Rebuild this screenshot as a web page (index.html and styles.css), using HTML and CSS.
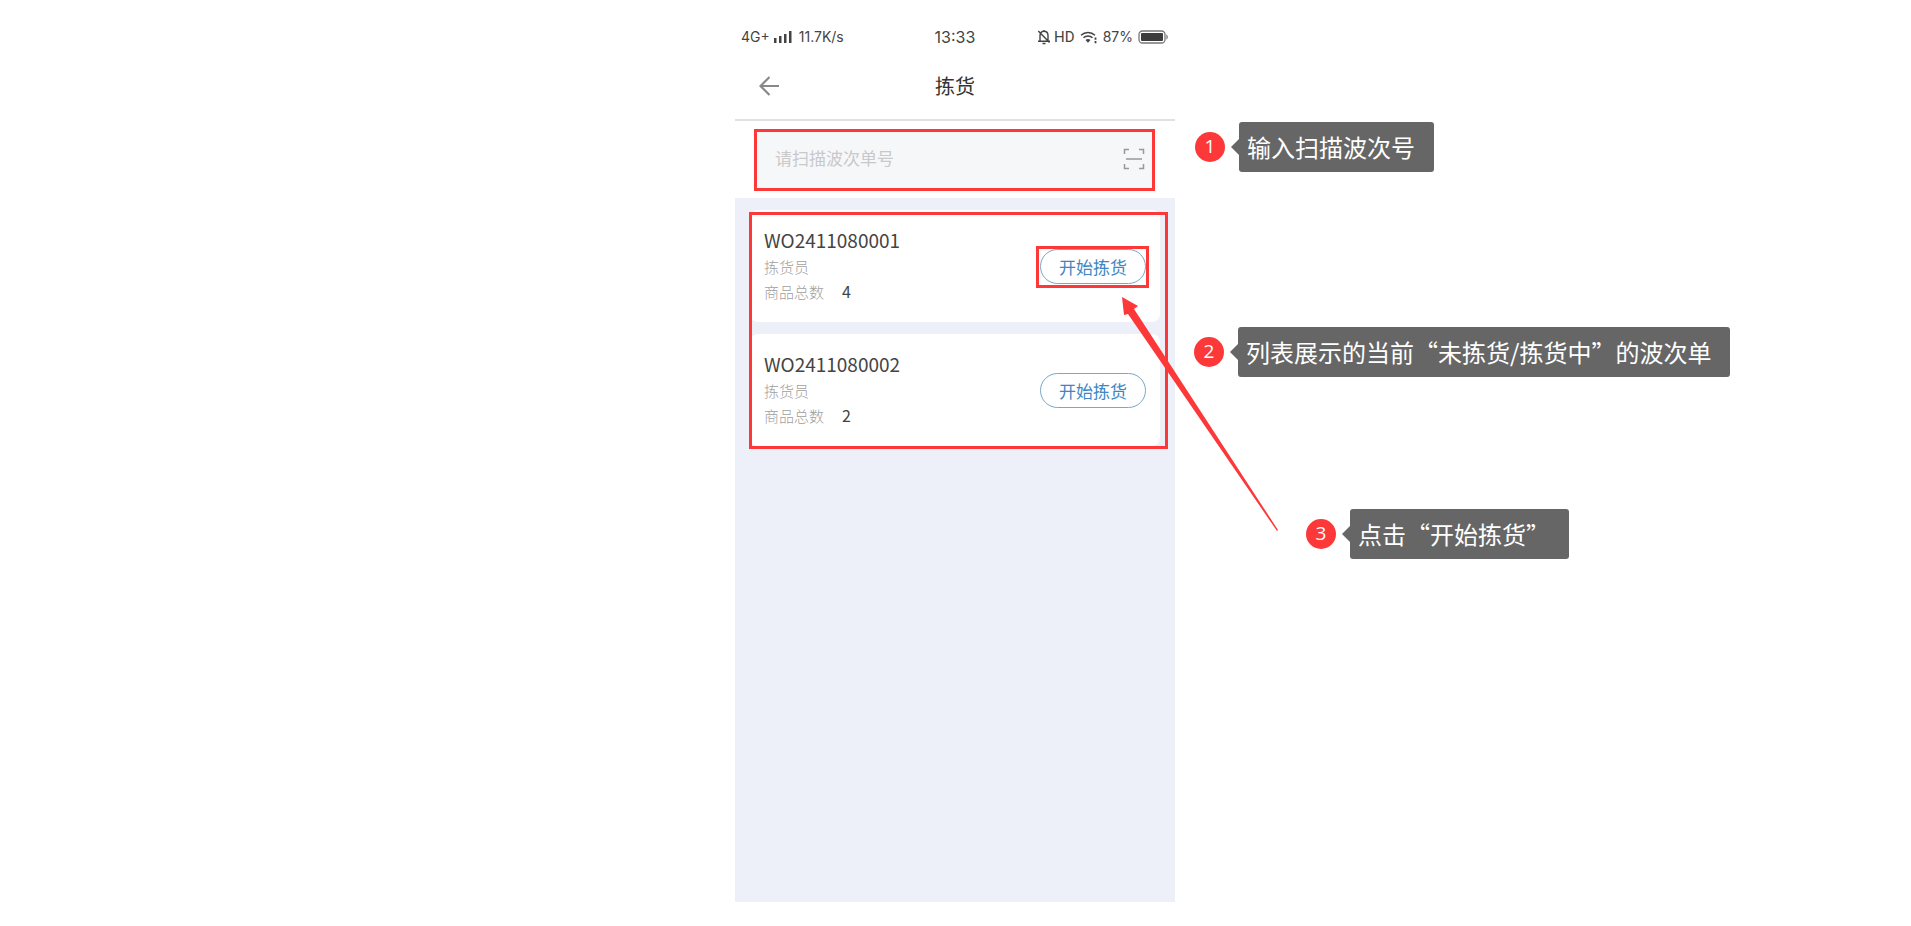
FILE: index.html
```html
<!DOCTYPE html>
<html lang="zh-CN">
<head>
  <meta charset="UTF-8">
  <meta name="viewport" content="width=device-width, initial-scale=1.0">
  <title>拣货</title>
  <link rel="stylesheet" href="styles.css">
</head>
<body>
  <div class="phone">
    <!-- Status bar -->
    <div class="status-bar">
      <div class="status-left">
        <span class="network">4G+</span>
        <svg width="18" height="14" viewBox="0 0 18 14" fill="#444">
          <rect x="0" y="8" width="2.500" height="5"/>
          <rect x="5" y="6" width="2.500" height="7"/>
          <rect x="10" y="4" width="2.500" height="9"/>
          <rect x="15" y="1" width="2.500" height="12"/>
        </svg>
        <span class="speed">11.7K/s</span>
      </div>
      <span class="clock">13:33</span>
      <div class="status-right">
        <svg width="14" height="16" viewBox="0 0 14 16" fill="none" stroke="#444" stroke-width="1.4">
          <path d="M3 12V6.500C3 4 4.500 2.300 7 2.300S11 4 11 6.500V12M1 12.200H13M1.300 2L12.500 13.500M7 1V2.300M5.500 14.500H8.500"/>
        </svg>
        <span class="hd">HD</span>
        <svg width="18" height="14" viewBox="0 0 18 14" fill="none" stroke="#444" stroke-width="1.500">
          <path d="M1 5.300C5 1.500 11 1.500 15 5.300M3.500 7.800C6 5.500 10 5.500 12.500 7.800"/>
          <path d="M5.500 10C7 8.700 9 8.700 10.500 10L8 12.800Z" fill="#444" stroke="none"/>
          <path d="M15.500 7.500V9.800M15.500 11V13.300" stroke-width="1.800"/>
        </svg>
        <span>87%</span>
        <svg width="31" height="14" viewBox="0 0 31 14">
          <rect x="1" y="1" width="26" height="12" rx="3.500" fill="none" stroke="#777" stroke-width="1.300"/>
          <rect x="3" y="3" width="22" height="8" rx="1" fill="#3c3c3c"/>
          <path d="M28.500 4.500C30 5 30 9 28.500 9.500Z" fill="#555"/>
        </svg>
      </div>
    </div>

    <!-- Title bar -->
    <header class="title-bar">
      <a href="#" class="back" aria-label="返回">
        <svg width="21" height="20" viewBox="0 0 21 20" fill="none" stroke="#888" stroke-width="2.200">
          <path d="M20 10H2M10.500 1L1.500 10L10.500 19"/>
        </svg>
      </a>
      <h1>拣货</h1>
    </header>

    <!-- Search -->
    <div class="search">
      <div class="search-field marked">
        <input type="text" placeholder="请扫描波次单号" aria-label="请扫描波次单号">
        <button class="scan" aria-label="扫描">
          <svg width="22" height="22" viewBox="0 0 22 22" fill="none" stroke="#999" stroke-width="1.500">
            <path d="M1.500 6V1.500H6M16 1.500H20.500V6M20.500 16V20.500H16M6 20.500H1.500V16M3 11H19"/>
          </svg>
        </button>
      </div>
    </div>

    <!-- Wave order list -->
    <main class="content">
      <div class="order-list">
        <div class="order-card">
          <div class="order-info">
            <h2>WO2411080001</h2>
            <p>拣货员</p>
            <p>商品总数<span class="count">4</span></p>
          </div>
          <div class="order-action marked">
            <button class="start-btn">开始拣货</button>
          </div>
        </div>
        <div class="order-card">
          <div class="order-info">
            <h2>WO2411080002</h2>
            <p>拣货员</p>
            <p>商品总数<span class="count">2</span></p>
          </div>
          <div class="order-action">
            <button class="start-btn">开始拣货</button>
          </div>
        </div>
      </div>
    </main>

    <!-- Notes over the screen -->
    <svg class="arrow" width="160" height="238" viewBox="0 0 160 238" fill="#fc3838">
      <path d="M2 1L18 10L14 13L158 234L157 235L8 18L4 19Z"/>
    </svg>
    <div class="note note-1"><span class="num">1</span><span class="bubble">输入扫描波次号</span></div>
    <div class="note note-2"><span class="num">2</span><span class="bubble">列表展示的当前“未拣货/拣货中”的波次单</span></div>
    <div class="note note-3"><span class="num">3</span><span class="bubble">点击“开始拣货”</span></div>
  </div>
</body>
</html>
```
FILE: styles.css
```css
* {
  box-sizing: border-box;
}
body {
  margin: 0;
  padding-right: 1px;
  background-color: #fff;
  color: #444;
  font-family: "Noto Sans CJK SC", sans-serif;
}
h1, h2, p {
  margin: 0;
  font-weight: normal;
}
button {
  font-family: inherit;
  cursor: pointer;
}
svg {
  display: block;
}
.phone {
  position: relative;
  display: flex;
  flex-direction: column;
  width: 440px;
  max-width: 100%;
  min-height: calc(100vh - 24px);
  margin: 0 auto;
}
.marked {
  outline: 3px solid #fc3838;
}

/* Status bar */
.status-bar {
  display: grid;
  grid-template-columns: 1fr auto 1fr;
  align-items: center;
  padding: 26px 6px 0;
  font-family: Inter, "Noto Sans CJK SC", sans-serif;
  font-size: 14px;
  line-height: 22px;
}
.status-left,
.status-right {
  display: flex;
  align-items: center;
}
.status-right {
  justify-content: flex-end;
  gap: 5px;
}
.network {
  margin-right: 4px;
}
.speed {
  margin-left: 7px;
}
.clock {
  font-size: 16px;
}
.hd {
  margin-left: -2px;
  font-family: Roboto, sans-serif;
  font-size: 15px;
}

/* Title bar */
.title-bar {
  display: grid;
  grid-template-columns: 1fr auto 1fr;
  align-items: center;
  padding: 23px 24px 18px;
  border-bottom: 2px solid #e0e1e3;
}
.back {
  width: 21px;
}
.title-bar h1 {
  color: #333;
  font-size: 20px;
  line-height: 30px;
}

/* Search */
.search {
  padding: 11px 23px 10px 22px;
}
.search-field {
  display: flex;
  align-items: center;
  height: 56px;
  padding: 0 7px 2px 18px;
  background-color: #f6f7f9;
}
.search-field input {
  flex: 1;
  min-width: 0;
  padding: 0 0 4px;
  border: none;
  background: none;
  color: #444;
  font-family: inherit;
  font-size: 17px;
}
.search-field input::placeholder {
  color: #c8c9cb;
}
.scan {
  padding: 0;
  border: none;
  background: none;
}

/* List */
.content {
  flex: 1;
  padding: 12px 15px;
  background-color: #edf0f9;
}
.order-list {
  position: relative;
  display: flex;
  flex-direction: column;
  gap: 12px;
}
.order-list::after {
  content: "";
  position: absolute;
  top: 2px;
  right: -8px;
  bottom: -3px;
  left: -1px;
  border: 3px solid #fc3838;
  pointer-events: none;
}
.order-card {
  display: flex;
  justify-content: space-between;
  align-items: flex-start;
  padding: 16px 14px;
  border-radius: 8px;
  background-color: #fff;
}
.order-info {
  padding-bottom: 2px;
}
.order-info h2 {
  font-size: 19px;
  line-height: 28px;
}
.order-info p {
  color: #a0a0a0;
  font-size: 15px;
  font-weight: 300;
  line-height: 25px;
}
.order-info .count {
  margin-left: 18px;
  color: #444;
  font-size: 16px;
  font-weight: normal;
}
.order-action {
  margin-top: 23px;
  padding: 0 0 1px 1px;
}
.start-btn {
  display: block;
  width: 106px;
  height: 35px;
  padding: 0;
  border: 1px solid #78a9c6;
  border-radius: 18px;
  background-color: #fff;
  color: #3c87c4;
  font-size: 17px;
  line-height: 30px;
}

/* Notes */
.arrow {
  position: absolute;
  top: 296px;
  left: 385px;
  pointer-events: none;
}
.note {
  position: absolute;
  display: flex;
  align-items: center;
  gap: 14px;
  white-space: nowrap;
}
.note-1 {
  top: 122px;
  left: 460px;
}
.note-2 {
  top: 327px;
  left: 459px;
}
.note-3 {
  top: 509px;
  left: 571px;
}
.num {
  width: 30px;
  height: 30px;
  border-radius: 50%;
  background-color: #fc3838;
  color: #fff;
  font-family: "Open Sans", sans-serif;
  font-size: 19px;
  line-height: 28px;
  text-align: center;
}
.bubble {
  position: relative;
  padding: 0 19px 0 8px;
  border-radius: 3px;
  background-color: #666;
  color: #fff;
  font-size: 24px;
  line-height: 50px;
}
.bubble::before {
  content: "";
  position: absolute;
  top: 17px;
  left: -8px;
  border-top: 8px solid transparent;
  border-right: 8px solid #666;
  border-bottom: 8px solid transparent;
}
```
